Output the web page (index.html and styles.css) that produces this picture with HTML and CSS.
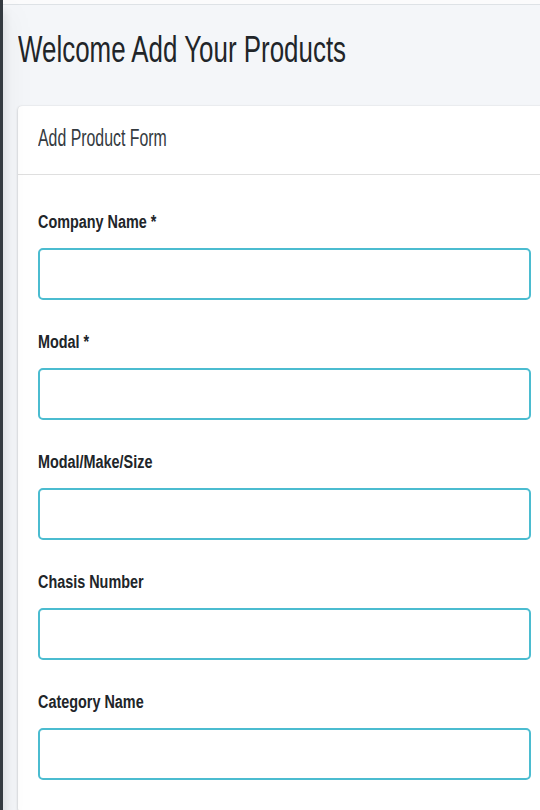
FILE: index.html
```html
<!DOCTYPE html>
<html lang="en">
<head>
<meta charset="utf-8">
<title>Add Products</title>
<link rel="stylesheet" href="styles.css">
</head>
<body>
<div class="wrapper">
  <aside class="sidebar"></aside>
  <div class="main">
    <nav class="navbar"></nav>
    <section class="content">
      <h1 class="page-title"><span class="narrow">Welcome Add Your Products</span></h1>
      <div class="card">
        <div class="card-header">
          <h3 class="card-title"><span class="narrow">Add Product Form</span></h3>
        </div>
        <form class="card-body">
          <div class="form-group">
            <label class="form-label"><span class="narrow">Company Name *</span></label>
            <input class="form-control" type="text">
          </div>
          <div class="form-group">
            <label class="form-label"><span class="narrow">Modal *</span></label>
            <input class="form-control" type="text">
          </div>
          <div class="form-group">
            <label class="form-label"><span class="narrow">Modal/Make/Size</span></label>
            <input class="form-control" type="text">
          </div>
          <div class="form-group">
            <label class="form-label"><span class="narrow">Chasis Number</span></label>
            <input class="form-control" type="text">
          </div>
          <div class="form-group">
            <label class="form-label"><span class="narrow">Category Name</span></label>
            <input class="form-control" type="text">
          </div>
        </form>
      </div>
    </section>
  </div>
</div>
</body>
</html>
```

FILE: styles.css
```css
html, body {
  margin: 0;
  padding: 0;
  height: 100%;
  overflow: hidden;
}
body {
  font-family: "Liberation Sans", Arial, sans-serif;
  color: #212529;
  background: #f4f6f9;
}
.wrapper {
  display: flex;
  min-height: 100%;
}
.sidebar {
  flex: 0 0 3px;
  background: #343a40;
  box-shadow: 0 14px 28px rgba(0,0,0,.25), 0 10px 10px rgba(0,0,0,.22);
  position: relative;
  z-index: 2;
}
.main {
  flex: 1;
  min-width: 0;
  overflow: hidden;
  background: #f4f6f9;
}
.navbar {
  height: 4px;
  background: #fbfbfc;
  border-bottom: 1px solid #dee2e6;
}
.content {
  padding: 23px 0 0 15px;
}
.narrow {
  display: inline-block;
  white-space: nowrap;
  transform-origin: left center;
}
.page-title {
  margin: 0;
  font-size: 36px;
  line-height: 44px;
  font-weight: 400;
  color: #212529;
}
.page-title .narrow {
  transform: scaleX(.72);
}
.card {
  margin-top: 34px;
  width: 533px;
  background: #fff;
  border-radius: 4px;
  box-shadow: 0 0 1px rgba(0,0,0,.125), 0 1px 3px rgba(0,0,0,.2);
}
.card-header {
  padding: 19px 20px 23px;
  border-bottom: 1px solid rgba(0,0,0,.125);
}
.card-title {
  margin: 0;
  font-size: 23px;
  line-height: 26px;
  font-weight: 400;
  color: #343a40;
}
.card-title .narrow {
  transform: scaleX(.69);
}
.card-body {
  padding: 37px 20px 0;
  display: flex;
  flex-direction: column;
}
.form-group {
  display: flex;
  flex-direction: column;
  margin-bottom: 32px;
}
.form-label {
  font-size: 18px;
  line-height: 20px;
  font-weight: 700;
  margin-bottom: 16px;
  color: #212529;
}
.form-label .narrow {
  transform: scaleX(.8);
}
.form-control {
  box-sizing: border-box;
  height: 52px;
  width: 100%;
  margin: 0;
  border: 2px solid #4bbcd0;
  border-radius: 5px;
  background: #fff;
  outline: none;
  font: inherit;
}
```
